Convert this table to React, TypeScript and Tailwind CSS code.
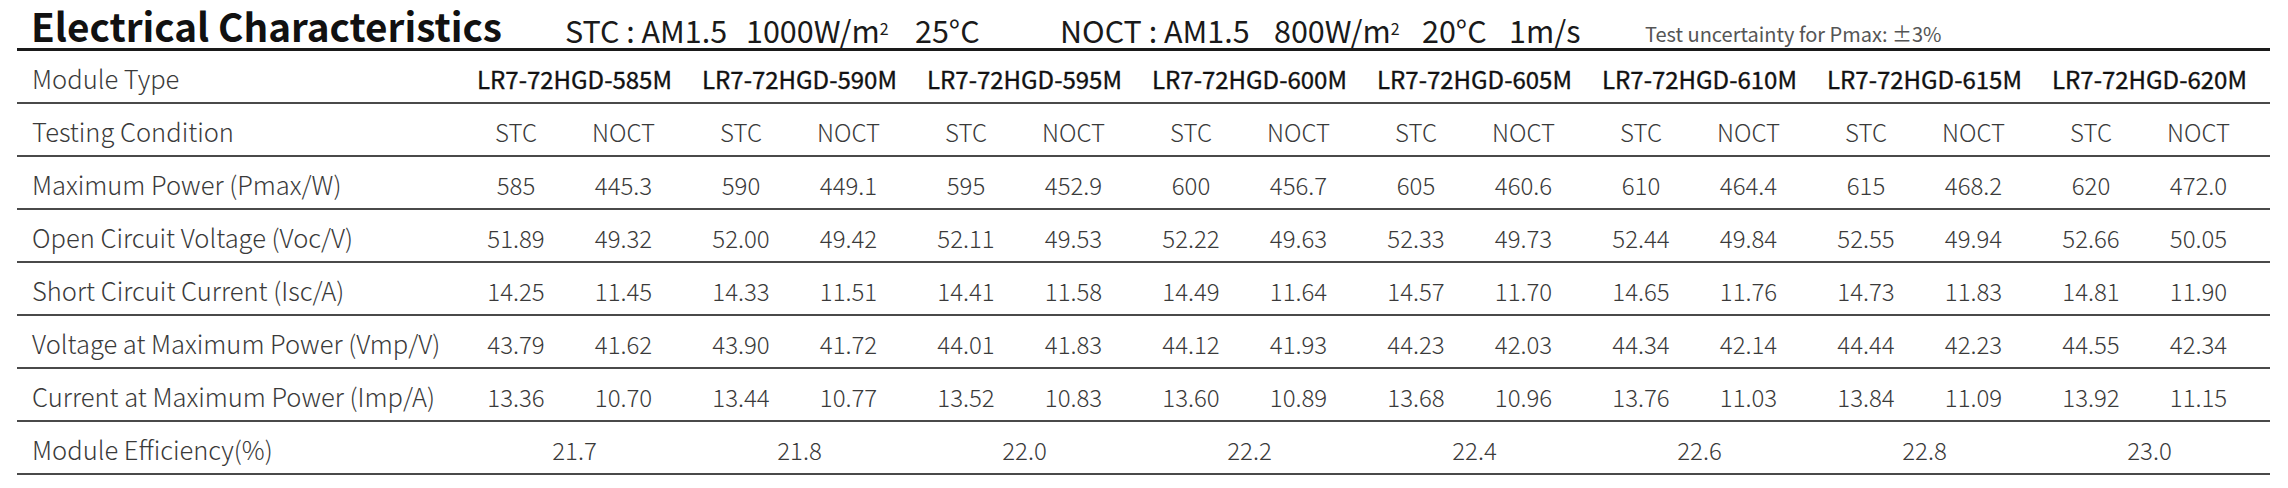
import React from "react";

const MODELS = ["585", "590", "595", "600", "605", "610", "615", "620"];

// pares [stc, noct] por modelo
const ROWS: { label: string; vals: string[] }[] = [
  {
    label: "Maximum Power (Pmax/W)",
    vals: ["585", "445.3", "590", "449.1", "595", "452.9", "600", "456.7", "605", "460.6", "610", "464.4", "615", "468.2", "620", "472.0"],
  },
  {
    label: "Open Circuit Voltage (Voc/V)",
    vals: ["51.89", "49.32", "52.00", "49.42", "52.11", "49.53", "52.22", "49.63", "52.33", "49.73", "52.44", "49.84", "52.55", "49.94", "52.66", "50.05"],
  },
  {
    label: "Short Circuit Current (Isc/A)",
    vals: ["14.25", "11.45", "14.33", "11.51", "14.41", "11.58", "14.49", "11.64", "14.57", "11.70", "14.65", "11.76", "14.73", "11.83", "14.81", "11.90"],
  },
  {
    label: "Voltage at Maximum Power (Vmp/V)",
    vals: ["43.79", "41.62", "43.90", "41.72", "44.01", "41.83", "44.12", "41.93", "44.23", "42.03", "44.34", "42.14", "44.44", "42.23", "44.55", "42.34"],
  },
  {
    label: "Current at Maximum Power (Imp/A)",
    vals: ["13.36", "10.70", "13.44", "10.77", "13.52", "10.83", "13.60", "10.89", "13.68", "10.96", "13.76", "11.03", "13.84", "11.09", "13.92", "11.15"],
  },
];

const EFF = ["21.7", "21.8", "22.0", "22.2", "22.4", "22.6", "22.8", "23.0"];

const FONT = { fontFamily: '"Noto Sans CJK SC", "Noto Sans", sans-serif' };

export default function App() {
  return (
    <div className="w-[2288px] h-[488px] bg-white text-[#3a3a3a]" style={FONT}>
      <div className="ml-[17px] w-[2253px]">
        {/* titulo + condicoes */}
        <div className="h-[48px] flex items-end pb-[3px] whitespace-nowrap text-[#1a1a1a]">
          <h1 className="ml-[14px] w-[534px] shrink-0 text-[38.7px] leading-none font-bold text-[#111]">
            Electrical Characteristics
          </h1>
          <span className="w-[181px] shrink-0 text-[30.5px] leading-none">STC : AM1.5</span>
          <span className="w-[169px] shrink-0 text-[30.5px] leading-none">
            1000W/m<sup className="text-[16px]">2</sup>
          </span>
          <span className="w-[145px] shrink-0 text-[30.5px] leading-none">25°C</span>
          <span className="w-[214px] shrink-0 text-[30.5px] leading-none">NOCT : AM1.5</span>
          <span className="w-[148px] shrink-0 text-[30.5px] leading-none">
            800W/m<sup className="text-[16px]">2</sup>
          </span>
          <span className="w-[87px] shrink-0 text-[30.5px] leading-none">20°C</span>
          <span className="w-[136px] shrink-0 text-[30.5px] leading-none">1m/s</span>
          <span className="text-[20px] leading-none text-[#555] mb-[1px]">Test uncertainty for Pmax: ±3%</span>
        </div>
        <div className="h-[3px] bg-[#1a1a1a]" />

        {/* tabela */}
        <Row label="Module Type">
          {MODELS.map((m) => (
            <div key={m} className="col-span-2 text-center text-[24px] text-[#111] [-webkit-text-stroke:0.35px_#111]">
              LR7-72HGD-{m}M
            </div>
          ))}
        </Row>
        <Row label="Testing Condition">
          {MODELS.map((m) => (
            <React.Fragment key={m}>
              <Stc>STC</Stc>
              <Noct>NOCT</Noct>
            </React.Fragment>
          ))}
        </Row>
        {ROWS.map((r) => (
          <Row key={r.label} label={r.label}>
            {r.vals.map((v, i) => (i % 2 === 0 ? <Stc key={i}>{v}</Stc> : <Noct key={i}>{v}</Noct>))}
          </Row>
        ))}
        <Row label="Module Efficiency(%)">
          {EFF.map((v) => (
            <div key={v} className="col-span-2 text-center text-[24px] font-light">
              {v}
            </div>
          ))}
        </Row>
      </div>
    </div>
  );
}

function Row({ label, children }: { label: string; children: React.ReactNode }) {
  return (
    <div className="h-[53px] border-b-2 border-[#4a4a4a] grid grid-cols-[445px_repeat(8,110px_115px)] items-center pt-[4px]">
      <div className="pl-[15px] text-[25.5px] font-light whitespace-nowrap">{label}</div>
      {children}
    </div>
  );
}

function Stc({ children }: { children: React.ReactNode }) {
  return <div className="pr-[2px] text-center text-[24px] font-light">{children}</div>;
}

function Noct({ children }: { children: React.ReactNode }) {
  return <div className="pr-[12px] text-center text-[24px] font-light">{children}</div>;
}
